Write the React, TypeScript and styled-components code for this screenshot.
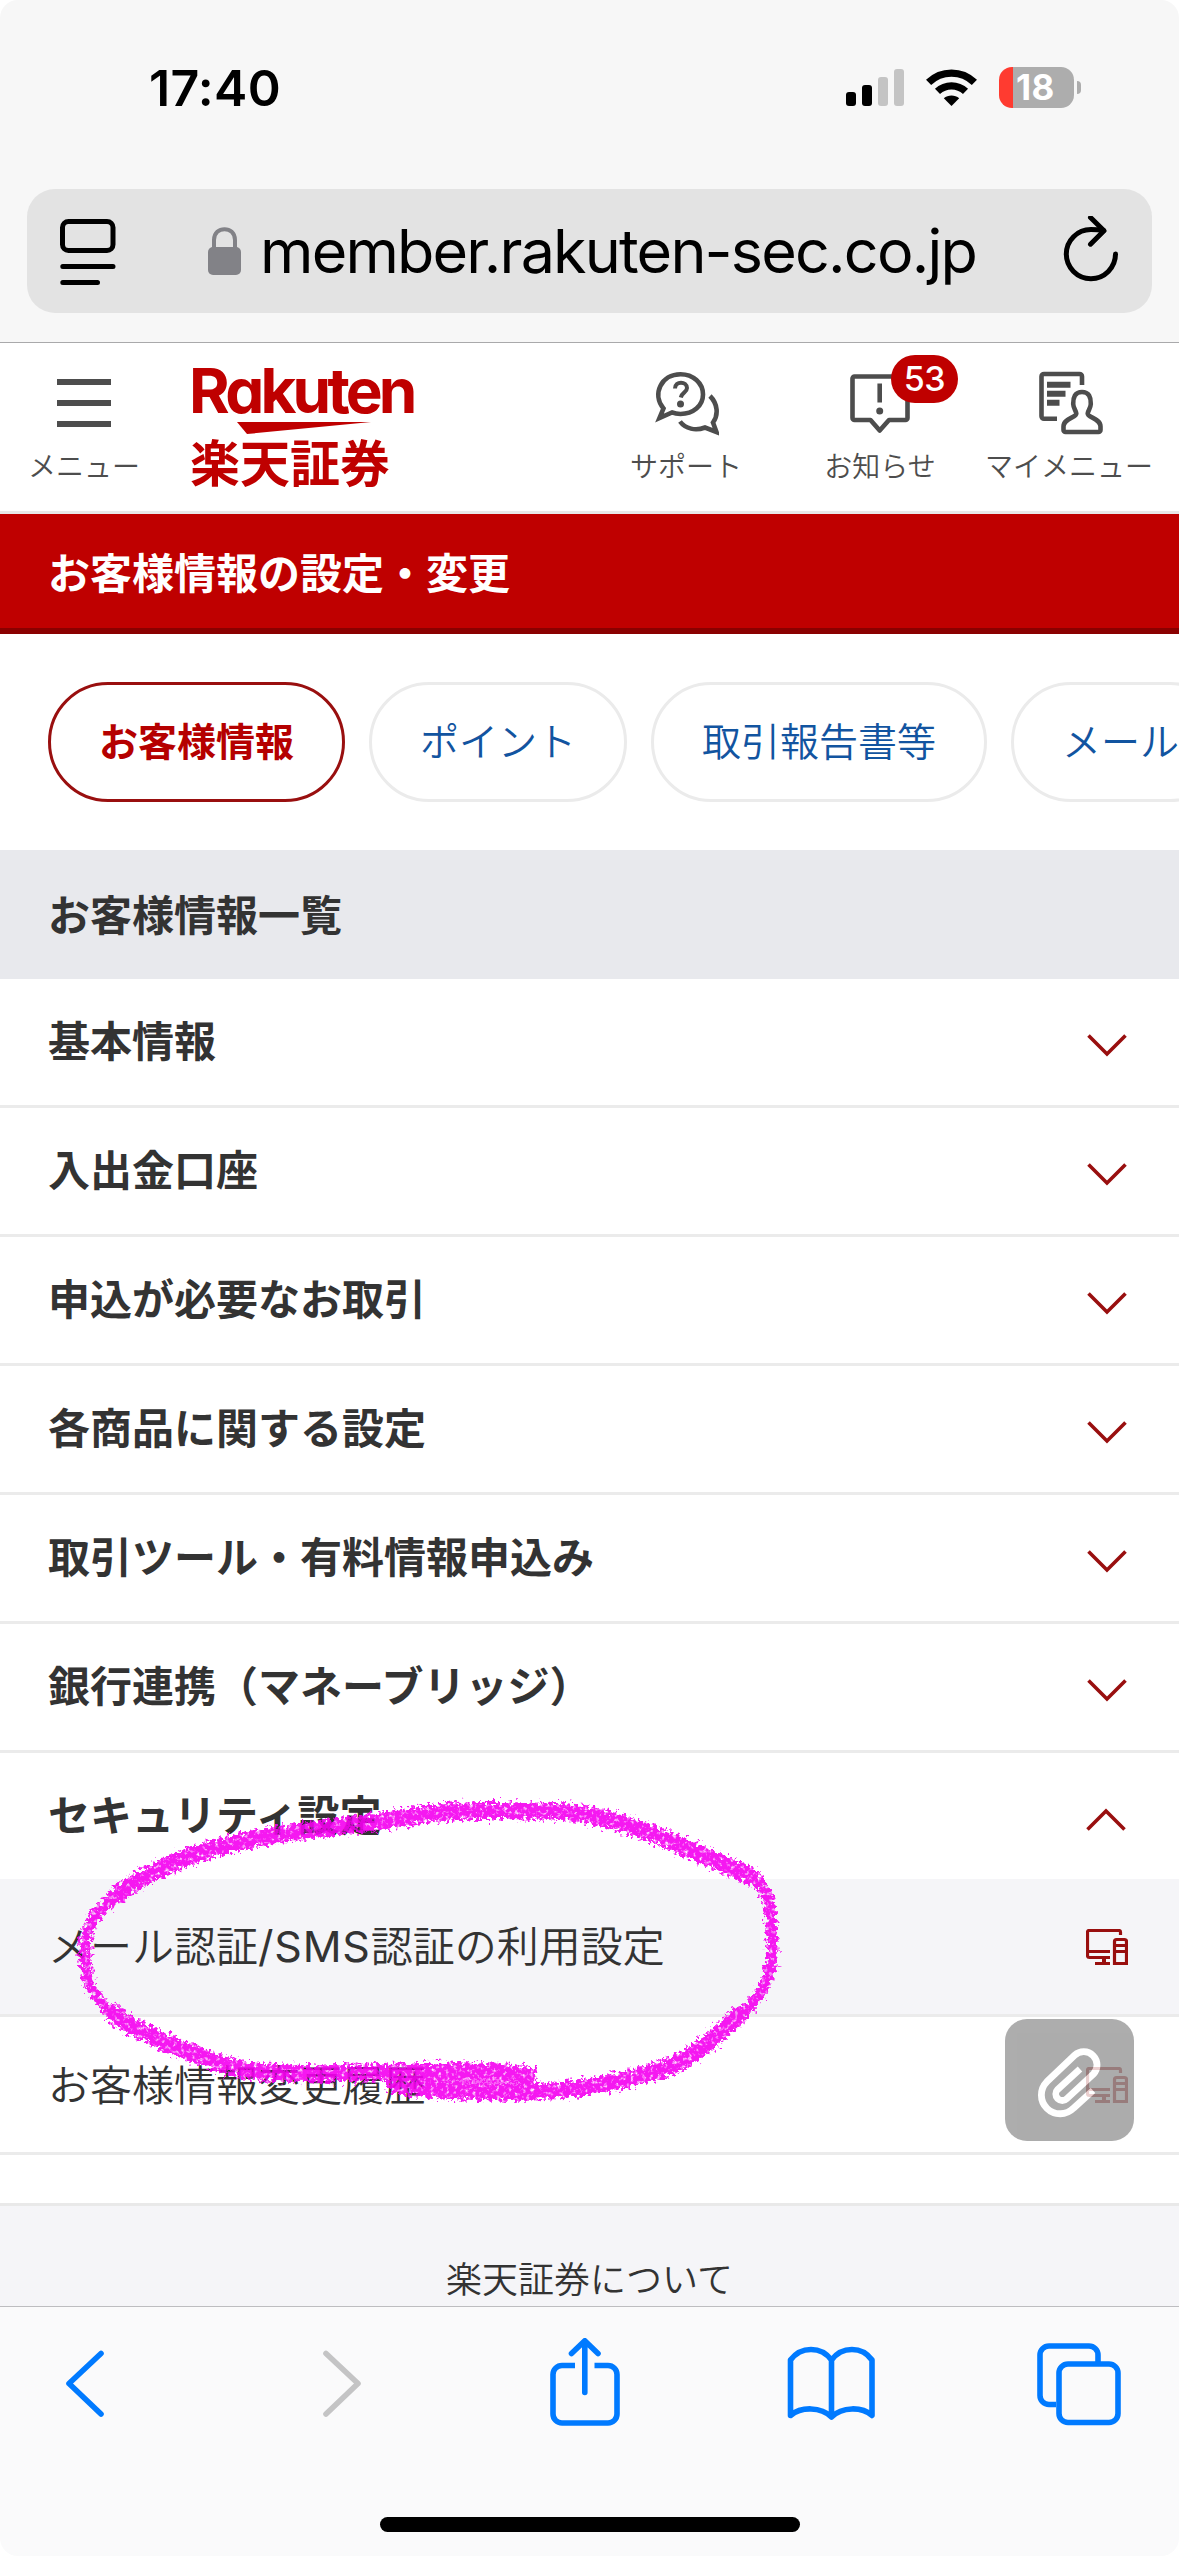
import React from "react";
import styled, { createGlobalStyle } from "styled-components";

const JP = `"Noto Sans CJK JP", "Noto Sans", sans-serif`;
const LATIN = `Inter, "Liberation Sans", sans-serif`;

const GlobalStyle = createGlobalStyle`
  * { box-sizing: border-box; }
  body { margin: 0; background: #fff; }
`;

const Screen = styled.div`
  position: relative;
  width: 1179px;
  height: 2556px;
  overflow: hidden;
  display: flex;
  flex-direction: column;
  border-radius: 18px;
  background: #fff;
  color: #333;
  font-family: ${JP};
`;

/* ---------- browser chrome, top ---------- */
const TopChrome = styled.header`
  height: 343px;
  flex: none;
  background: #f7f7f7;
  border-bottom: 1px solid #a9a9ab;
`;

const StatusBar = styled.div`
  height: 189px;
  padding: 67px 98px 0 149px;
  display: flex;
  justify-content: space-between;
  align-items: flex-start;
`;

const Clock = styled.time`
  font: 600 50px/42px ${LATIN};
  letter-spacing: 0.3px;
  color: #000;
`;

const StatusIcons = styled.div`
  display: flex;
  align-items: center;
  height: 41px;
`;

const SignalSvg = styled.svg`margin-right: 22px;`;
const WifiSvg = styled.svg`margin-right: 22px;`;

const Battery = styled.div`
  width: 75px;
  height: 41px;
  border-radius: 13px;
  background: linear-gradient(to right, #ff3b30 14px, #adadad 14px);
  color: #fff;
  font: 700 35px/41px ${LATIN};
  letter-spacing: 0.5px;
  padding-left: 17px;
`;

const BatteryTip = styled.div`
  width: 4px;
  height: 13px;
  margin-left: 3px;
  border-radius: 0 4px 4px 0;
  background: #adadad;
`;

const AddressBar = styled.div`
  height: 124px;
  margin: 0 27px;
  padding: 0 33px;
  border-radius: 28px;
  background: #e3e3e3;
  display: flex;
  align-items: center;
  justify-content: space-between;
`;

const UrlGroup = styled.div`
  display: flex;
  align-items: center;
  gap: 19px;
  padding-left: 5px;
`;

const Url = styled.span`
  font: 400 61px/72px ${LATIN};
  letter-spacing: -1.8px;
  color: #000;
  white-space: nowrap;
`;

/* ---------- site header ---------- */
const SiteHeader = styled.div`
  height: 171px;
  flex: none;
  display: flex;
  padding-right: 18px;
  border-bottom: 3px solid #e8e8e8;
`;

const NavItem = styled.div<{ $w: number }>`
  position: relative;
  width: ${(p) => p.$w}px;
  padding-top: 27px;
  display: flex;
  flex-direction: column;
  align-items: center;
  svg { flex: none; }
`;

const NavLabel = styled.span`
  margin-top: 15px;
  font: 350 28px/28px ${JP};
  color: #4d4d4d;
  white-space: nowrap;
`;

const Badge = styled.span`
  position: absolute;
  left: 108px;
  top: 12px;
  width: 67px;
  height: 48px;
  border-radius: 24px;
  background: #bf0000;
  color: #fff;
  font: 500 34px/48px ${LATIN};
  letter-spacing: -0.5px;
  text-align: center;
`;

const Brand = styled.div`
  flex: 1;
  padding: 10px 0 0 21px;
  display: flex;
  flex-direction: column;
  color: #bf0000;
`;

const BrandLatin = styled.span`
  height: 69px;
  font: 700 62px/76px ${LATIN};
  font-feature-settings: "cv11", "ss03";
  letter-spacing: -3.8px;
`;

const Swoosh = styled.svg`margin-left: 48px; flex: none;`;

const BrandKanji = styled.span`
  margin-left: 1px;
  font: 700 50px/52px ${JP};
`;

/* ---------- page content ---------- */
const PageTitle = styled.h1`
  margin: 0;
  height: 120px;
  flex: none;
  padding: 0 48px;
  border-bottom: 6px solid #8a0000;
  background: #bf0000;
  color: #fff;
  font: 700 42px/114px ${JP};
`;

const Tabs = styled.nav`
  flex: none;
  height: 216px;
  padding: 48px;
  display: flex;
  gap: 24px;
`;

const Tab = styled.span<{ $active?: boolean }>`
  flex: none;
  height: 120px;
  padding: 0 48px;
  border: 3px solid ${(p) => (p.$active ? "#990f0f" : "#ebebeb")};
  border-radius: 60px;
  color: ${(p) => (p.$active ? "#b50000" : "#1254a0")};
  font: ${(p) => (p.$active ? 700 : 350)} 39px/109px ${JP};
`;

const SectionTitle = styled.h2`
  margin: 0;
  flex: none;
  height: 129px;
  padding: 0 48px;
  background: #e8e9ed;
  font: 700 42px/126px ${JP};
`;

const Row = styled.div<{ $open?: boolean }>`
  flex: none;
  height: ${(p) => (p.$open ? 126 : 129)}px;
  padding: 0 52px 0 48px;
  display: flex;
  align-items: center;
  justify-content: space-between;
  border-bottom: ${(p) => (p.$open ? 0 : 3)}px solid #ebebeb;
  font: 700 42px/60px ${JP};
`;

const RowText = styled.span`
  margin-top: -6px;
`;

const ChevronSvg = styled.svg<{ $up?: boolean }>`
  margin: ${(p) => (p.$up ? "8px 1px 0 0" : "5px 0 0 0")};
`;

const SubRow = styled.div<{ $tint?: boolean }>`
  flex: none;
  height: 138px;
  padding: 0 51px 0 48px;
  display: flex;
  align-items: center;
  justify-content: space-between;
  border-bottom: 3px solid #ebebeb;
  background: ${(p) => (p.$tint ? "#f5f5f8" : "#fff")};
  font: 350 42px/60px ${JP};
`;

const SubText = styled.span`
  margin-top: -3px;
`;

const LatinRun = styled.span`
  font-family: ${LATIN};
  font-size: 43px;
  font-weight: 400;
  letter-spacing: 0.8px;
`;

const SiteFooter = styled.footer`
  flex: none;
  margin-top: 48px;
  height: 103px;
  border-top: 3px solid #e9e9e9;
  background: #f5f5f8;
  font: 350 36px/142px ${JP};
  text-align: center;
`;

/* ---------- floating pieces ---------- */
const AttachButton = styled.button`
  position: absolute;
  left: 1005px;
  top: 2019px;
  width: 129px;
  height: 122px;
  padding: 0;
  border: 0;
  border-radius: 22px;
  background: #989898;
  opacity: 0.8;
  display: flex;
`;

const Scribble = styled.svg`
  position: absolute;
  left: 0;
  top: 1780px;
  pointer-events: none;
  opacity: 0.9;
`;

/* ---------- browser chrome, bottom ---------- */
const BottomBar = styled.div`
  flex: none;
  height: 250px;
  border-top: 1px solid #bdbdc0;
  background: #fafafb;
  display: flex;
  flex-direction: column;
  align-items: center;
`;

const Tools = styled.div`
  width: 100%;
  height: 210px;
  padding: 31px 0 0 66px;
  display: grid;
  grid-template-columns: 257px 227px 237px 250px auto;
  align-items: start;
`;

const HomeIndicator = styled.div`
  width: 420px;
  height: 15px;
  border-radius: 8px;
  background: #000;
`;

/* ---------- icons ---------- */
const Signal = () => (
  <SignalSvg width="58" height="37" viewBox="0 0 58 37">
    <rect x="0" y="23" width="10" height="14" rx="3" />
    <rect x="16" y="16" width="10" height="21" rx="3" />
    <rect x="32" y="8" width="10" height="29" rx="3" fill="#c4c4c4" />
    <rect x="48" y="0" width="10" height="37" rx="3" fill="#c4c4c4" />
  </SignalSvg>
);

const Wifi = () => (
  <WifiSvg width="51" height="37" viewBox="0 0 51 37">
    <path d="M25.5 37 17.8 29.3C22 25.6 29 25.6 33.2 29.3Z" />
    <path d="M11.5 22.4C19.4 15 31.6 15 39.5 22.4" fill="none" stroke="#000" strokeWidth="7.4" />
    <path d="M2.6 13.4C15.4 1 35.6 1 48.4 13.4" fill="none" stroke="#000" strokeWidth="7.4" />
  </WifiSvg>
);

const PageMenu = () => (
  <svg width="56" height="68" viewBox="0 0 56 68" fill="none" stroke="#000" strokeWidth="5" strokeLinecap="round">
    <rect x="2.5" y="4.500" width="50.5" height="29" rx="6" />
    <path d="M2.8 49.500H53M2.8 65.500H37.5" />
  </svg>
);

const Lock = () => (
  <svg width="33" height="50" viewBox="0 0 33 50">
    <rect x="0" y="21" width="33" height="28" rx="5" fill="#828287" />
    <path d="M6 23V14C6 -0.5 27 -0.5 27 14V23" fill="none" stroke="#828287" strokeWidth="4" />
  </svg>
);

const Reload = () => (
  <svg width="56" height="70" viewBox="0 -2 56 70" fill="none" stroke="#000" strokeWidth="5" strokeLinecap="round" strokeLinejoin="round">
    <path d="M52.500 36A24.600 24.600 0 1 1 28 11.500C32.500 11.500 36.500 11.800 40.500 12.500" />
    <path d="M27.500 -0.500 41 12.800 27.500 26.200" />
  </svg>
);

const Hamburger = () => (
  <svg width="54" height="66" viewBox="0 0 54 66" fill="#4d4d4d">
    <path d="M0 9h54v6H0zM0 30h54v6H0zM0 51h54v6H0z" />
  </svg>
);

const Support = () => (
  <svg width="66" height="66" viewBox="-1.500 0 66 66" fill="none" stroke="#4d4d4d" strokeWidth="4.600">
    <path d="M9 38.500C-3 24 7 4.200 26 4.200 38.500 4.200 48.500 13 48.500 24.500 48.500 36 38.500 44 26 44 22.500 44 20 43.500 17.500 42.400L5 48Z" />
    <path d="M20.500 18.500C20.500 10.500 32.500 11 32.500 18 32.500 22.500 27.500 22 26.300 27.500" strokeWidth="4" />
    <circle cx="26" cy="34" r="3.500" fill="#4d4d4d" stroke="none" />
    <path d="M55.500 26C63.500 34 64 45 58.500 52.500L62 62 50.500 57.500C41 61 31 59 25.500 51.500" />
  </svg>
);

const Notice = () => (
  <svg width="60" height="66" viewBox="0 0 60 66" fill="none" stroke="#4d4d4d" strokeWidth="4.600" strokeLinejoin="round">
    <path d="M5 6.500H55.500a2 2 0 0 1 2 2V48a2 2 0 0 1-2 2H39L29.700 60.500 20.500 50H4.500a2 2 0 0 1-2-2V8.500a2 2 0 0 1 2-2Z" />
    <path d="M29.700 13.500V32.500" />
    <circle cx="29.700" cy="41" r="3.500" fill="#4d4d4d" stroke="none" />
  </svg>
);

const MyMenu = () => (
  <svg width="64" height="66" viewBox="-1.500 0 64 66" fill="none" stroke="#4d4d4d" strokeWidth="4.600" overflow="visible">
    <path d="M18.500 48.800H5.500a2.500 2.500 0 0 1-2.500-2.500V6.500A2.500 2.500 0 0 1 5.500 4H41a2.500 2.500 0 0 1 2.500 2.500V15" />
    <path d="M8.500 14.800H32M8.500 23.800H27M8.500 32.800H21" strokeWidth="6" />
    <path d="M43.500 22C36.500 22 34.500 27.500 34.700 34 34.900 38.500 37.500 40.500 37.800 43.500 38 47.500 25 48.500 25 56.500V60a2 2 0 0 0 2 2H60a2 2 0 0 0 2-2V56.500C62 48.500 49 47.500 49.200 43.500 49.500 40.500 52.100 38.500 52.300 34 52.500 27.500 50.500 22 43.500 22Z" />
  </svg>
);

const Chevron = ({ up }: { up?: boolean }) => (
  <ChevronSvg $up={up} width="40" height="24" viewBox="0 0 40 24" fill="none" stroke="#990f0f" strokeWidth="3.600">
    <path d={up ? "M1.500 21.500 20 3 38.500 21.500" : "M1.500 2.500 20 21 38.500 2.500"} />
  </ChevronSvg>
);

const Devices = () => (
  <svg width="42" height="36" viewBox="0 0 42 36" fill="none" stroke="#990f0f" strokeWidth="3.200">
    <path d="M34.500 6V3a1.500 1.500 0 0 0-1.500-1.500H3A1.500 1.500 0 0 0 1.500 3V26.500A2 2 0 0 0 3.500 28.500H24M1.500 22.500H24M9 34.500H24" />
    <path d="M18 28V34" strokeWidth="4" />
    <path d="M28.500 34.500V12.500a2 2 0 0 1 2-2h8a2 2 0 0 1 2 2V34.500ZM28.500 16.500h12M28.500 22.500h12" />
  </svg>
);

const Clip = () => (
  <svg width="129" height="122" viewBox="1005 2019 129 122" fill="none" stroke="#fff" strokeWidth="6.800">
    <path d="M1093 2090.500 1073.500 2108.200A18.700 18.700 0 0 1 1046.800 2081.800L1074.600 2055.300A13.300 13.300 0 0 1 1093.400 2074.100L1066.900 2098.600A6.500 6.500 0 0 1 1057.700 2089.400L1080 2069" />
  </svg>
);

const tool = { fill: "none", strokeWidth: 5.6, strokeLinecap: "round" as const, strokeLinejoin: "round" as const };

const Back = () => (
  <svg width="38" height="90" viewBox="66 2338 38 90" stroke="#007aff" {...tool}>
    <path d="M101 2353.500 69 2383.500 101 2414" />
  </svg>
);
const Forward = () => (
  <svg width="38" height="90" viewBox="323 2338 38 90" stroke="#c4c4c5" {...tool}>
    <path d="M326 2353.500 358 2383.500 326 2414" />
  </svg>
);
const Share = () => (
  <svg width="70" height="90" viewBox="550 2338 70 90" stroke="#007aff" {...tool}>
    <path d="M575 2365.500H562a9 9 0 0 0-9 9V2414a9 9 0 0 0 9 9H608a9 9 0 0 0 9-9V2374.500a9 9 0 0 0-9-9H594.500" strokeLinecap="butt" />
    <path d="M584.800 2341.500V2392.500M571.500 2353.500 584.800 2340.800 598 2353.500" />
  </svg>
);
const Book = () => (
  <svg width="88" height="90" viewBox="787 2338 88 90" stroke="#007aff" {...tool}>
    <path d="M831.500 2360C821 2346 801 2346 790.500 2360V2415.500C801 2406.500 821 2406.500 831.500 2417 842 2406.500 862 2406.500 872 2415.500V2360C862 2346 842 2346 831.500 2360V2417" />
  </svg>
);
const TabsIcon = () => (
  <svg width="84" height="90" viewBox="1037 2338 84 90" stroke="#007aff" {...tool}>
    <path d="M1056 2404.500H1049a9 9 0 0 1-9-9V2355a9 9 0 0 1 9-9H1089a9 9 0 0 1 9 9V2362" strokeLinecap="butt" />
    <rect x="1059" y="2364" width="59" height="58.500" rx="9" />
  </svg>
);

const Marker = () => (
  <Scribble width="1179" height="370" viewBox="0 1780 1179 370">
    <defs>
      <filter id="crayon" x="0" y="1780" width="1179" height="370" filterUnits="userSpaceOnUse" colorInterpolationFilters="sRGB">
        <feTurbulence type="fractalNoise" baseFrequency="0.26" numOctaves="3" seed="7" result="n" />
        <feDisplacementMap in="SourceGraphic" in2="n" scale="15" xChannelSelector="R" yChannelSelector="G" result="d" />
        <feColorMatrix in="n" type="matrix" values="0 0 0 0 1  0 0 0 0 1  0 0 0 0 1  0 0 3 0 -0.35" result="g" />
        <feComposite in="d" in2="g" operator="in" />
      </filter>
    </defs>
    <g filter="url(#crayon)" fill="none" stroke="#f500f0" strokeLinecap="round" strokeLinejoin="round">
      <path
        strokeWidth="17"
        d="M528 2075C480 2069 440 2071 400 2072S290 2076 245 2070C210 2062 160 2042 125 2022L112 2012M116 1896C150 1869 190 1854 240 1842S340 1828 400 1818 510 1810 570 1812C640 1821 690 1852 745 1873L753 1878M739 2015C715 2037 690 2061 665 2068 620 2084 580 2088 550 2091S430 2091 395 2085"
      />
      <path strokeWidth="11" d="M118 2016C90 1998 85 1978 85 1955 84 1925 96 1910 120 1894M752 1878C771 1890 770 1910 772 1935S771 1992 738 2016" />
      <path strokeWidth="9" strokeOpacity="0.7" d="M400 2082C440 2084 490 2083 528 2084" />
    </g>
  </Scribble>
);

const rows = [
  "基本情報",
  "入出金口座",
  "申込が必要なお取引",
  "各商品に関する設定",
  "取引ツール・有料情報申込み",
  "銀行連携（マネーブリッジ）",
];

export default function App() {
  return (
    <>
      <GlobalStyle />
      <Screen>
        <TopChrome>
          <StatusBar>
            <Clock>17:40</Clock>
            <StatusIcons>
              <Signal />
              <Wifi />
              <Battery>18</Battery>
              <BatteryTip />
            </StatusIcons>
          </StatusBar>
          <AddressBar>
            <PageMenu />
            <UrlGroup>
              <Lock />
              <Url>member.rakuten-sec.co.jp</Url>
            </UrlGroup>
            <Reload />
          </AddressBar>
        </TopChrome>

        <SiteHeader>
          <NavItem $w={168}>
            <Hamburger />
            <NavLabel>メニュー</NavLabel>
          </NavItem>
          <Brand>
            <BrandLatin>Rakuten</BrandLatin>
            <Swoosh width="134" height="12" viewBox="0 0 134 12">
              <path d="M0 0H134L10 12Z" fill="#bf0000" />
            </Swoosh>
            <BrandKanji>楽天証券</BrandKanji>
          </Brand>
          <NavItem $w={194}>
            <Support />
            <NavLabel>サポート</NavLabel>
          </NavItem>
          <NavItem $w={194}>
            <Notice />
            <NavLabel>お知らせ</NavLabel>
            <Badge>53</Badge>
          </NavItem>
          <NavItem $w={184}>
            <MyMenu />
            <NavLabel>マイメニュー</NavLabel>
          </NavItem>
        </SiteHeader>

        <PageTitle>お客様情報の設定・変更</PageTitle>
        <Tabs>
          <Tab $active>お客様情報</Tab>
          <Tab>ポイント</Tab>
          <Tab>取引報告書等</Tab>
          <Tab>メール</Tab>
        </Tabs>

        <SectionTitle>お客様情報一覧</SectionTitle>
        {rows.map((label) => (
          <Row key={label}>
            <RowText>{label}</RowText>
            <Chevron />
          </Row>
        ))}
        <Row $open>
          <RowText>セキュリティ設定</RowText>
          <Chevron up />
        </Row>
        <SubRow $tint>
          <SubText>
            メール認証<LatinRun>/SMS</LatinRun>認証の利用設定
          </SubText>
          <Devices />
        </SubRow>
        <SubRow>
          <SubText>お客様情報変更履歴</SubText>
          <Devices />
        </SubRow>
        <SiteFooter>楽天証券について</SiteFooter>

        <BottomBar>
          <Tools>
            <Back />
            <Forward />
            <Share />
            <Book />
            <TabsIcon />
          </Tools>
          <HomeIndicator />
        </BottomBar>

        <Marker />
        <AttachButton aria-label="attach">
          <Clip />
        </AttachButton>
      </Screen>
    </>
  );
}
